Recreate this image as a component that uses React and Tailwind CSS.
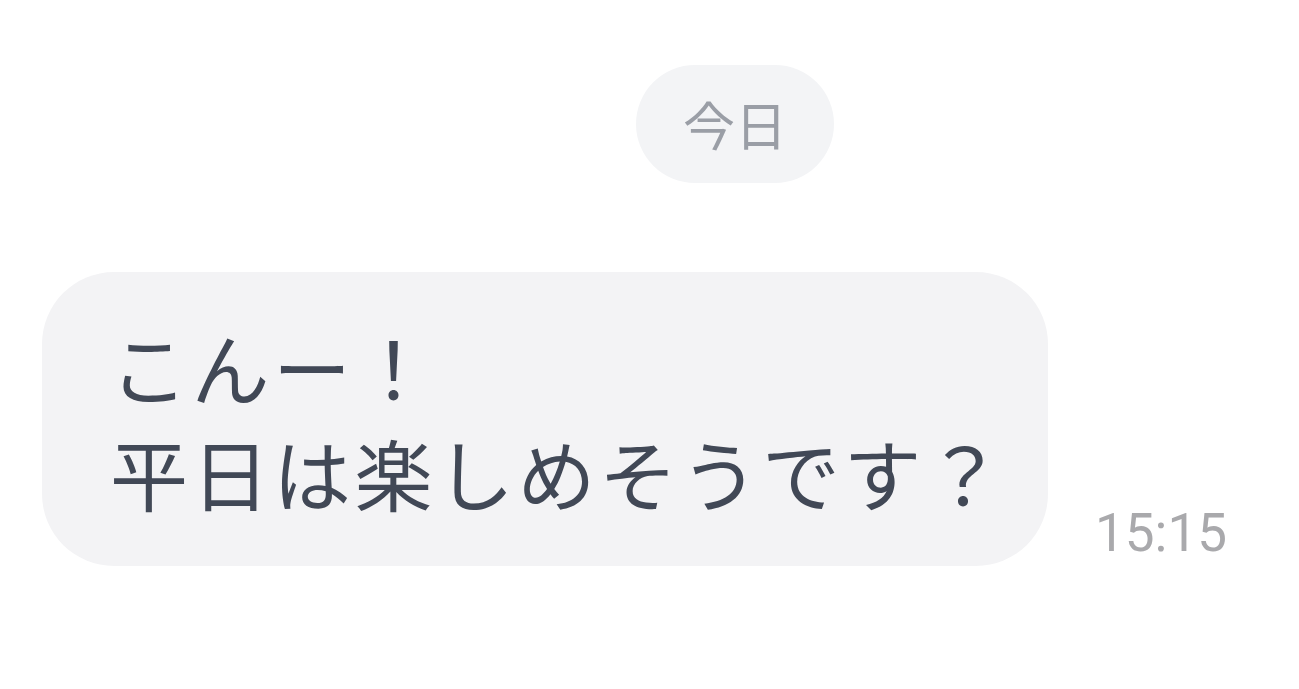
export default function App() {
  const jp = { fontFamily: '"Noto Sans CJK JP", "Noto Sans", sans-serif' };

  return (
    <div className="min-h-screen w-full bg-white" style={jp}>
      <div className="flex pt-[65px] pl-[636px]">
        <div className="flex h-[118px] w-[198px] items-center justify-center rounded-full bg-[#f3f4f6] text-[52px] leading-none text-[#9a9ea6]">
          今日
        </div>
      </div>

      <div className="mt-[89px] flex items-end pl-[42px]">
        <div className="w-[1006px] rounded-[72px] bg-[#f3f3f5] py-[41px] pl-[68px] pr-[30px] text-[78px] leading-[106px] tracking-[3.5px] text-[#414856]">
          <p>こんー！</p>
          <p>平日は楽しめそうです？</p>
        </div>
        <span className="mb-[3px] ml-[47px] font-['Roboto'] text-[53px] leading-[60px] text-[#a9a9ac]">
          15:15
        </span>
      </div>
    </div>
  );
}
